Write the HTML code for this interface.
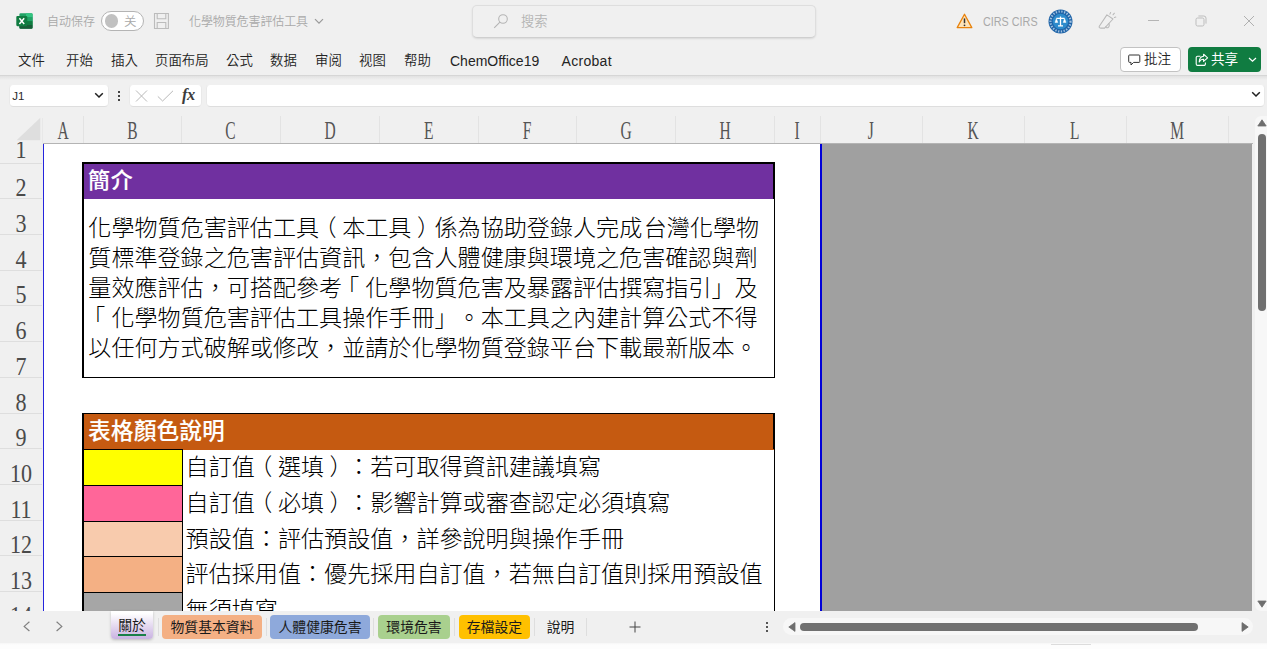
<!DOCTYPE html>
<html lang="zh-TW">
<head>
<meta charset="utf-8">
<title>化學物質危害評估工具</title>
<style>
*{box-sizing:border-box;margin:0;padding:0}
html,body{width:1267px;height:649px;overflow:hidden;background:#f0f0f0}
body{position:relative;font-family:"Liberation Sans","Noto Sans CJK SC",sans-serif;font-size:13.3px;color:#222}
.abs{position:absolute}
.ui{position:absolute;white-space:nowrap;line-height:20px;height:20px}
.tc{font-family:"Liberation Sans","Noto Sans CJK TC",sans-serif}
.gray{color:#a9a9a9;font-weight:350}
.menu{top:51px;font-weight:350;color:#242424;font-size:13.4px}
/* formula bar */
.box{position:absolute;background:#fff;border-radius:4.5px;top:83.5px;height:23.5px;border:1px solid #e9e9e9;border-top-color:#f0f0f0;border-bottom-color:#dedede}
/* headers */
.colh{position:absolute;top:116px;height:27px;border-right:1px solid #e3e3e3;font-family:"Liberation Serif","Noto Serif CJK SC",serif;font-size:25px;color:#555;text-align:center;line-height:29px;overflow:hidden}
.colh span{display:inline-block;transform:scaleX(.62);position:relative;left:-.4px}
.rowh{position:absolute;left:0;width:42px;border-bottom:1px solid #dedede;font-family:"Liberation Serif","Noto Serif CJK SC",serif;font-size:24.5px;color:#4a4a4a;text-align:center;overflow:hidden}
.rowh span{position:absolute;left:0;right:0;bottom:-2.5px;line-height:27px;display:block;transform:scaleX(.9)}
/* sheet */
.cell{position:absolute}
.txt{position:absolute;text-spacing-trim:space-all;font-kerning:none;font-feature-settings:"palt" 0,"halt" 0,"chws" 0,"kern" 0;white-space:nowrap;font-family:"Liberation Sans","Noto Sans CJK TC",sans-serif;font-size:23.08px;color:#000;font-weight:300}
.pl{position:relative;left:-5.5px}.pr{position:relative;left:5.5px}
.tab{position:absolute;top:615px;height:24px;border-radius:4px;font-family:"Liberation Sans","Noto Sans CJK TC",sans-serif;font-size:13.85px;line-height:24px;text-align:center;color:#1a1a1a;white-space:nowrap}
.sep{position:absolute;top:618px;height:18px;width:1px;background:#dedede}
</style>
</head>
<body>

<!-- ===== title bar ===== -->
<svg class="abs" style="left:15.5px;top:13px" width="17" height="16" viewBox="0 0 17 16">
  <rect x="3.4" y="0.2" width="13.2" height="15.6" rx="1.3" fill="#21a366"/>
  <path d="M10 .2 H15.3 A1.3 1.3 0 0 1 16.6 1.5 V4.2 H10 Z" fill="#33c481"/>
  <rect x="3.4" y="4.2" width="6.6" height="3.9" fill="#107c41"/>
  <rect x="10" y="4.2" width="6.6" height="3.9" fill="#21a366"/>
  <rect x="10" y="8.1" width="6.6" height="3.9" fill="#107c41"/>
  <rect x="3.4" y="8.1" width="6.6" height="3.9" fill="#185c37"/>
  <path d="M3.4 12 H16.6 V14.5 A1.3 1.3 0 0 1 15.3 15.8 H4.7 A1.3 1.3 0 0 1 3.4 14.5 Z" fill="#185c37"/>
  <rect x="0.3" y="3" width="11" height="10.2" rx="1.1" fill="#107c41"/>
  <path d="M3.4 5.3 L8.2 10.9 M8.2 5.3 L3.4 10.9" stroke="#fff" stroke-width="1.5" fill="none"/>
</svg>
<div class="ui gray" style="left:47px;top:12px;font-size:12px;letter-spacing:0">自动保存</div>
<div class="abs" style="left:101px;top:11px;width:43px;height:20px;border:1px solid #b4b4b4;border-radius:10px;background:#fff"></div>
<div class="abs" style="left:104.5px;top:14.2px;width:13.5px;height:13.5px;border-radius:7px;background:#c1c1c1"></div>
<div class="ui gray" style="left:124px;top:12px;font-size:12.5px">关</div>
<svg class="abs" style="left:153px;top:13px" width="17" height="16" preserveAspectRatio="none" viewBox="0 0 17 17" fill="none" stroke="#bcbcbc" stroke-width="1.1">
  <path d="M1.5 0.6 H15.4 V16.4 H1.5 Z"/>
  <path d="M4.2 0.6 V6.2 H12.8 V0.6"/>
  <path d="M4.2 16.4 V10.2 H12.8 V16.4"/>
</svg>
<div class="ui gray tc" style="left:189px;top:12px;font-size:12px;letter-spacing:-0.1px">化學物質危害評估工具</div>
<svg class="abs" style="left:314px;top:18px" width="10" height="7" viewBox="0 0 10 7" fill="none" stroke="#9a9a9a" stroke-width="1.2"><path d="M1 1.2 L5 5.2 L9 1.2"/></svg>

<!-- search -->
<div class="abs" style="left:472px;top:5px;width:344px;height:33px;border:1px solid #dedede;border-bottom-color:#cfcfcf;border-radius:5px;background:#f0f0f0;box-shadow:0 1px 2px rgba(0,0,0,.10)"></div>
<svg class="abs" style="left:493px;top:13px" width="16" height="16" viewBox="0 0 16 16" fill="none" stroke="#b4b4b4" stroke-width="1.05"><circle cx="10" cy="6" r="4.3"/><path d="M6.9 9.1 L1.2 14.8"/></svg>
<div class="ui gray" style="left:521px;top:12px;font-size:13.3px;color:#b4b4b4">搜索</div>

<!-- right side of title bar -->
<svg class="abs" style="left:956px;top:13px" width="17" height="16" viewBox="0 0 17 16">
  <path d="M8.5 1.3 L15.8 14.6 H1.2 Z" fill="#fde3b8" stroke="#e8820c" stroke-width="1.3" stroke-linejoin="round"/>
  <path d="M8.5 5.4 V10.2" stroke="#333" stroke-width="1.5"/><circle cx="8.5" cy="12.3" r="0.9" fill="#333"/>
</svg>
<div class="ui gray" style="left:983px;top:12px;font-size:12.2px;transform:scaleX(.886);transform-origin:0 50%">CIRS CIRS</div>
<svg class="abs" style="left:1048px;top:9px" width="25" height="25" viewBox="0 0 25 25">
  <circle cx="12.5" cy="12.5" r="12" fill="#1f64a8"/>
  <circle cx="12.5" cy="12.5" r="10" fill="none" stroke="#cfe2f3" stroke-opacity=".75" stroke-width="2.2" stroke-dasharray="1.3 1.5"/>
  <circle cx="12.5" cy="12.5" r="7.8" fill="#2d8bcc"/>
  <path d="M12.5 7.6 V16.6 M8.4 9.4 H16.6 M10 16.9 H15" stroke="#fff" stroke-width="1.3" fill="none"/>
  <path d="M8.4 9.6 L7 13.4 H9.8 Z M16.6 9.6 L15.2 13.4 H18 Z" fill="#fff" stroke="#fff" stroke-width=".5"/>
</svg>
<svg class="abs" style="left:1098px;top:12px" width="19" height="18" viewBox="0 0 19 18" fill="none" stroke="#b9b9b9" stroke-width="1.05" stroke-linejoin="round" stroke-linecap="round">
  <path d="M1.3 14.2 L8.9 2.9 L15 7 L6.6 16.1 H2.4 Q.7 16 1.3 14.2 Z"/>
  <path d="M7.8 14.8 C8.4 17 12.4 15.6 10.9 11.5"/>
  <path d="M11.9 2.1 L12.6 .5 M15 2.8 L16.4 1.2 M16.4 5.5 L17.8 5.1"/>
</svg>
<div class="abs" style="left:1148px;top:20px;width:11px;height:1px;background:#b5b5b5"></div>
<svg class="abs" style="left:1195px;top:15px" width="12" height="12" viewBox="0 0 12 12" fill="none" stroke="#bdbdbd" stroke-width="1"><rect x="1" y="3" width="8" height="8" rx="1.6"/><path d="M3.4 1 H8.8 A2.2 2.2 0 0 1 11 3.2 V8.6"/></svg>
<svg class="abs" style="left:1243px;top:15px" width="12" height="12" viewBox="0 0 12 12" fill="none" stroke="#b0b0b0" stroke-width="1"><path d="M1 1 L11 11 M11 1 L1 11"/></svg>

<!-- ===== menu ===== -->
<div class="ui menu" style="left:18px">文件</div>
<div class="ui menu" style="left:66px">开始</div>
<div class="ui menu" style="left:111px">插入</div>
<div class="ui menu" style="left:155px">页面布局</div>
<div class="ui menu" style="left:226px">公式</div>
<div class="ui menu" style="left:270px">数据</div>
<div class="ui menu" style="left:315px">审阅</div>
<div class="ui menu" style="left:359px">视图</div>
<div class="ui menu" style="left:404px">帮助</div>
<div class="ui menu" style="left:450px;font-size:14px">ChemOffice19</div>
<div class="ui menu" style="left:561.5px;font-size:14px;letter-spacing:.3px">Acrobat</div>

<div class="abs" style="left:1120px;top:47px;width:61px;height:25px;border:1px solid #c2c2c2;border-radius:4px;background:#fff"></div>
<svg class="abs" style="left:1128px;top:54px" width="13" height="13" viewBox="0 0 13 13" fill="none" stroke="#333" stroke-width="1"><path d="M1.5 1 H11 A.8 .8 0 0 1 11.8 1.8 V7.6 A.8 .8 0 0 1 11 8.4 H5.6 L3 11 V8.4 H1.5 A.8 .8 0 0 1 .7 7.6 V1.8 A.8 .8 0 0 1 1.5 1 Z"/></svg>
<div class="ui" style="left:1144px;top:50px;font-size:13.6px;color:#222;font-weight:350">批注</div>
<div class="abs" style="left:1188px;top:47px;width:73px;height:25px;border-radius:4px;background:#107c41"></div>
<svg class="abs" style="left:1195px;top:53px" width="14" height="14" viewBox="0 0 14 14" fill="none" stroke="#fff" stroke-width="1.1" stroke-linejoin="round"><path d="M5.5 3.2 H2.6 A1.4 1.4 0 0 0 1.2 4.6 V11 A1.4 1.4 0 0 0 2.6 12.4 H9 A1.4 1.4 0 0 0 10.4 11 V9.6"/><path d="M8.6 1.2 L12.6 4.8 L8.6 8.4 V6.3 C6.4 6.3 5 7.2 4.2 9 C4.3 5.8 5.8 3.6 8.6 3.3 Z"/></svg>
<div class="ui" style="left:1211px;top:50px;font-size:13.6px;color:#fff">共享</div>
<svg class="abs" style="left:1248px;top:57px" width="9" height="6" viewBox="0 0 9 6" fill="none" stroke="#fff" stroke-width="1.2"><path d="M1 1 L4.5 4.3 L8 1"/></svg>

<!-- ribbon bottom line -->
<div class="abs" style="left:0;top:75px;width:1267px;height:1px;background:#d6d6d6"></div>
<div class="abs" style="left:0;top:76px;width:1267px;height:40px;background:#f0f0f0"></div>
<div class="abs" style="left:0;top:76px;width:1267px;height:4px;background:linear-gradient(#e2e2e2,#f0f0f0)"></div>

<!-- ===== formula bar ===== -->
<div class="box" style="left:8.5px;width:100px"></div>
<div class="ui" style="left:12.2px;top:86px;font-size:11.5px;color:#2a2a2a">J1</div>
<svg class="abs" style="left:94px;top:92px" width="10" height="7" viewBox="0 0 10 7" fill="none" stroke="#1f1f1f" stroke-width="1.5"><path d="M1.2 1.2 L5 5 L8.8 1.2"/></svg>
<div class="abs" style="left:118px;top:91px;width:2px;height:2px;background:#444;box-shadow:0 4px 0 #444,0 8px 0 #444"></div>
<div class="box" style="left:128.5px;width:73px"></div>
<svg class="abs" style="left:135px;top:90px" width="13" height="12" viewBox="0 0 13 12" fill="none" stroke="#b8b8b8" stroke-width="1"><path d="M1 .5 L12 11.5 M12 .5 L1 11.5"/></svg>
<svg class="abs" style="left:157px;top:90px" width="17" height="12" viewBox="0 0 17 12" fill="none" stroke="#b8b8b8" stroke-width="1"><path d="M.8 6.4 L5.6 11 L16 .8"/></svg>
<div class="ui" style="left:182px;top:84.5px;font-family:'Liberation Serif',serif;font-style:italic;font-weight:700;font-size:16.5px;color:#3c3c3c;letter-spacing:-.6px">fx</div>
<div class="box" style="left:205.5px;width:1059px"></div>
<svg class="abs" style="left:1251px;top:91px" width="10" height="7" viewBox="0 0 10 7" fill="none" stroke="#1f1f1f" stroke-width="1.5"><path d="M1.2 1.2 L5 5 L8.8 1.2"/></svg>

<!-- ===== column headers ===== -->
<div class="abs" style="left:0;top:116px;width:1253px;height:28px;background:#f0f0f0"></div>
<div class="abs" style="left:43px;top:143px;width:1210px;height:1px;background:#b4b4b4"></div>
<svg class="abs" style="left:16px;top:117px" width="25" height="24" viewBox="0 0 25 24"><path d="M24.3 .8 V23.2 H.6 Z" fill="#dedede"/></svg>
<div class="abs" style="left:42px;top:118px;width:1px;height:25px;background:#e8e8e8"></div>
<div class="colh" style="left:43px;width:41px"><span>A</span></div>
<div class="colh" style="left:84px;width:98px"><span>B</span></div>
<div class="colh" style="left:182px;width:99px"><span>C</span></div>
<div class="colh" style="left:281px;width:99px"><span>D</span></div>
<div class="colh" style="left:380px;width:99px"><span>E</span></div>
<div class="colh" style="left:479px;width:98px"><span>F</span></div>
<div class="colh" style="left:577px;width:99px"><span>G</span></div>
<div class="colh" style="left:676px;width:99px"><span>H</span></div>
<div class="colh" style="left:775px;width:46px"><span>I</span></div>
<div class="colh" style="left:821px;width:102px"><span>J</span></div>
<div class="colh" style="left:923px;width:102px"><span>K</span></div>
<div class="colh" style="left:1025px;width:102px"><span>L</span></div>
<div class="colh" style="left:1127px;width:102px"><span>M</span></div>
<!-- ===== sheet area ===== -->
<div class="abs" style="left:43px;top:144px;width:778px;height:467px;background:#fff"></div>
<div class="abs" style="left:822px;top:144px;width:430px;height:467px;background:#a0a0a0"></div>
<div class="abs" style="left:42.7px;top:144px;width:1.3px;height:467px;background:#2525dd"></div>
<div class="abs" style="left:819.9px;top:144px;width:2.3px;height:467px;background:#0000d8"></div>
<!-- ===== row headers ===== -->
<div class="abs" style="left:0;top:144px;width:43px;height:467px;background:#f0f0f0"></div>
<div class="rowh" style="top:142.4px;height:21.6px"><span style="bottom:0px">1</span></div>
<div class="rowh" style="top:164px;height:35px"><span>2</span></div>
<div class="rowh" style="top:199px;height:36px"><span>3</span></div>
<div class="rowh" style="top:235px;height:36px"><span>4</span></div>
<div class="rowh" style="top:271px;height:35px"><span>5</span></div>
<div class="rowh" style="top:306px;height:36px"><span>6</span></div>
<div class="rowh" style="top:342px;height:36px"><span>7</span></div>
<div class="rowh" style="top:378px;height:36px"><span>8</span></div>
<div class="rowh" style="top:414px;height:35px"><span>9</span></div>
<div class="rowh" style="top:449px;height:36px"><span>10</span></div>
<div class="rowh" style="top:485px;height:36px"><span>11</span></div>
<div class="rowh" style="top:521px;height:35px"><span>12</span></div>
<div class="rowh" style="top:556px;height:36px"><span>13</span></div>
<div class="rowh" style="top:592px;height:36px"><span style="bottom:-1.5px">14</span></div>
<!-- ===== box 1 ===== -->
<div class="cell" style="left:82px;top:162px;width:693px;height:216px;background:#000"></div>
<div class="cell" style="left:83.7px;top:164px;width:689.8px;height:35px;background:#7030a0"></div>
<div class="cell" style="left:83.5px;top:199px;width:690px;height:178px;background:#fff"></div>
<div class="txt" style="left:88px;top:163px;line-height:35px;color:#fff;font-weight:500;-webkit-text-stroke:.15px #fff;font-size:22px;letter-spacing:.8px">簡介</div>
<div class="txt" style="left:88.3px;top:213.3px;line-height:30px">化學物質危害評估工具<span class="pl">（</span>本工具<span class="pr">）</span>係為協助登錄人完成<span style="margin-left:1.5px">台</span>灣化學物<br>質標準登錄之危害評估資訊，包含人體健康與環境之危害確認與劑<br>量效應評估，可搭配參考<span class="pl" style="left:-6px">「</span>化學物質危害及暴露評估撰寫指引」及<br><span class="pl" style="left:-6px">「</span>化學物質危害評估工具操作手冊」。本工具之內建計算公式不得<br>以任何方式破解或修改，並請於化學物質登錄平台下載最新版本。</div>
<!-- ===== table 2 ===== -->
<div class="cell" style="left:82px;top:412.6px;width:693px;height:198.4px;background:#000"></div>
<div class="cell" style="left:83.7px;top:414px;width:689.8px;height:35px;background:#c55a11"></div>
<div class="cell" style="left:183px;top:449px;width:590.5px;height:.6px;background:#c55a11"></div>
<div class="txt" style="left:88.3px;top:413.5px;line-height:35px;color:#fff;font-weight:500;-webkit-text-stroke:.15px #fff;font-size:22.4px;letter-spacing:.4px">表格顏色說明</div>
<div class="cell" style="left:83.5px;top:450px;width:98.5px;height:35px;background:#ffff00"></div>
<div class="cell" style="left:83.5px;top:486px;width:98.5px;height:35px;background:#ff6699"></div>
<div class="cell" style="left:83.5px;top:522px;width:98.5px;height:34px;background:#f8cbad"></div>
<div class="cell" style="left:83.5px;top:557px;width:98.5px;height:35px;background:#f4b084"></div>
<div class="cell" style="left:83.5px;top:593px;width:98.5px;height:18px;background:#a6a6a6"></div>
<div class="cell" style="left:183px;top:449.6px;width:590.5px;height:161.4px;background:#fff"></div>
<div class="txt" style="left:185.6px;top:449px;line-height:36px">自訂值<span class="pl">（</span>選填<span class="pr">）</span>：若可取得資訊建議填寫</div>
<div class="txt" style="left:185.6px;top:485px;line-height:36px">自訂值<span class="pl">（</span>必填<span class="pr">）</span>：影響計算或審查認定必須填寫</div>
<div class="txt" style="left:185.6px;top:520.5px;line-height:36px">預設值：評估預設值，詳參說明與操作手冊</div>
<div class="txt" style="left:185.6px;top:556px;line-height:36px">評估採用值：優先採用自訂值，若無自訂值則採用預設值</div>
<div class="txt" style="left:185.6px;top:592px;line-height:36px">無須填寫</div>

<!-- ===== bottom bar ===== -->
<div class="abs" style="left:0;top:611px;width:1267px;height:38px;background:#f0f0f0"></div>
<div class="abs" style="left:0;top:643px;width:1267px;height:6px;background:linear-gradient(#f6f6f6,#fdfdfd 2px)"></div>
<div class="abs" style="left:1051px;top:644px;width:40px;height:1px;background:#dcdcdc"></div>
<svg class="abs" style="left:22.5px;top:621px" width="8" height="11" viewBox="0 0 8 11" fill="none" stroke="#808080" stroke-width="1.2"><path d="M6.4 .8 L1.2 5.4 L6.4 10"/></svg>
<svg class="abs" style="left:54.5px;top:621px" width="8" height="11" viewBox="0 0 8 11" fill="none" stroke="#808080" stroke-width="1.2"><path d="M1.6 .8 L6.8 5.4 L1.6 10"/></svg>
<div class="tab" style="left:111px;top:611px;width:42px;height:27.5px;line-height:28.5px;border-radius:0 0 4px 4px;background:linear-gradient(#fff 8%,#c9b2e1);box-shadow:0 1px 3px rgba(0,0,0,.22)">關於</div>
<div class="abs" style="left:118px;top:634px;width:28px;height:2.3px;background:#1a8048"></div>
<div class="sep" style="left:158px"></div>
<div class="tab" style="left:162px;width:100px;background:#f4b084">物質基本資料</div>
<div class="sep" style="left:266px"></div>
<div class="tab" style="left:270px;width:100px;background:#8ea9db">人體健康危害</div>
<div class="sep" style="left:373px"></div>
<div class="tab" style="left:378px;width:72px;background:#a9d08e">環境危害</div>
<div class="sep" style="left:454px"></div>
<div class="tab" style="left:458.7px;width:71.5px;background:#ffc000">存檔設定</div>
<div class="sep" style="left:534px"></div>
<div class="tab" style="left:539px;width:43px">說明</div>
<div class="sep" style="left:586px"></div>
<svg class="abs" style="left:629px;top:621px" width="12" height="12" viewBox="0 0 12 12" fill="none" stroke="#444" stroke-width="1"><path d="M6 .5 V11.5 M.5 6 H11.5"/></svg>
<div class="abs" style="left:766px;top:622px;width:2px;height:2px;background:#555;box-shadow:0 4px 0 #555,0 8px 0 #555"></div>
<div class="abs" style="left:783px;top:618px;width:470px;height:17px;border-radius:8.5px;background:#f7f7f7"></div>
<svg class="abs" style="left:788px;top:622px" width="8" height="10" viewBox="0 0 8 10"><path d="M7 .6 V9.4 L.8 5 Z" fill="#6e6e6e" stroke="#6e6e6e" stroke-width=".8" stroke-linejoin="round"/></svg>
<div class="abs" style="left:800px;top:623px;width:398px;height:8px;border-radius:4px;background:#707070"></div>
<svg class="abs" style="left:1241px;top:622px" width="8" height="10" viewBox="0 0 8 10"><path d="M1 .6 V9.4 L7.2 5 Z" fill="#6e6e6e" stroke="#6e6e6e" stroke-width=".8" stroke-linejoin="round"/></svg>
<!-- ===== vertical scrollbar ===== -->
<div class="abs" style="left:1253px;top:116px;width:14px;height:495px;background:#f0f0f0"></div>
<div class="abs" style="left:1255px;top:116px;width:12px;height:495px;border-radius:6px 0 0 6px;background:#f7f7f7"></div>
<svg class="abs" style="left:1257px;top:119px" width="10" height="8" viewBox="0 0 10 8"><path d="M.8 7 H9.2 L5 .8 Z" fill="#6e6e6e" stroke="#6e6e6e" stroke-width=".8" stroke-linejoin="round"/></svg>
<div class="abs" style="left:1258px;top:134px;width:8px;height:177px;border-radius:4px;background:#707070"></div>
<svg class="abs" style="left:1257px;top:600px" width="10" height="8" viewBox="0 0 10 8"><path d="M.8 1 H9.2 L5 7.2 Z" fill="#6e6e6e" stroke="#6e6e6e" stroke-width=".8" stroke-linejoin="round"/></svg>

</body>
</html>
